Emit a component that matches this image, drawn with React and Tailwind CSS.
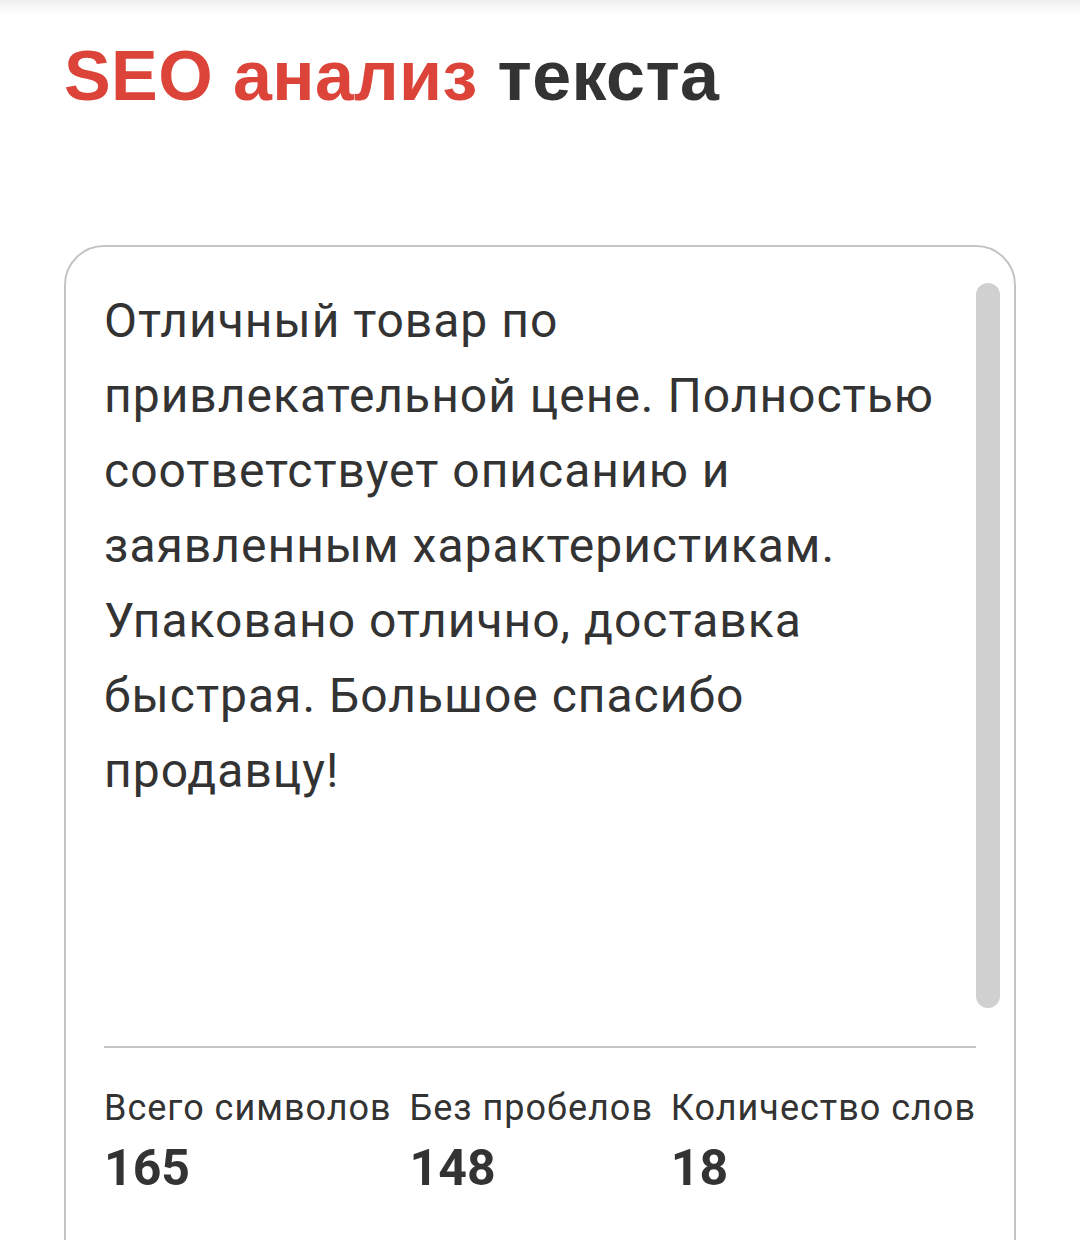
const reviewText =
    "Отличный товар по привлекательной цене. Полностью соответствует описанию и заявленным характеристикам. Упаковано отлично, доставка быстрая. Большое спасибо продавцу!";

const stats = [
    { label: "Всего символов", value: "165" },
    { label: "Без пробелов", value: "148" },
    { label: "Количество слов", value: "18" },
];

function App() {
    return (
        <div className="w-[1080px] h-[1240px] bg-white overflow-hidden relative">
            <div className="h-[14px] bg-gradient-to-b from-[#efefef] to-white" />

            <div className="pl-[64px] pr-[64px]">
                <h1
                    className="mt-[22px] text-[70px] leading-[80px] font-bold tracking-[0.4px] text-[#333333]"
                    style={{ fontFamily: '"Liberation Sans", Arial, sans-serif' }}
                >
                    <span className="text-[#dc4439]">SEO анализ</span> текста
                </h1>

                <div className="mt-[129px] border-2 border-[#c4c4c4] rounded-[40px] pl-[38px] pr-[14px] pt-[36px] h-[1100px]">
                    <div className="flex">
                        <p
                            className="flex-1 h-[725px] text-[48px] leading-[75px] tracking-[1px] text-[#333333] pr-[20px]"
                            style={{ fontFamily: "Roboto, sans-serif" }}
                        >
                            {reviewText}
                        </p>
                        <div className="w-[24px] h-[725px] bg-[#d0d0d0] rounded-full" />
                    </div>

                    <div className="mr-[24px] mt-[38px] border-t-2 border-[#c4c4c4]" />

                    <div
                        className="mr-[24px] mt-[38px] flex justify-between text-[#333333]"
                        style={{ fontFamily: "Roboto, sans-serif" }}
                    >
                        {stats.map((s) => (
                            <div key={s.label} className="flex flex-col">
                                <span className="text-[36px] leading-[44px] tracking-[1px]">{s.label}</span>
                                <span className="text-[50px] leading-[60px] font-bold mt-[8px]">{s.value}</span>
                            </div>
                        ))}
                    </div>
                </div>
            </div>
        </div>
    );
}

export default App;
